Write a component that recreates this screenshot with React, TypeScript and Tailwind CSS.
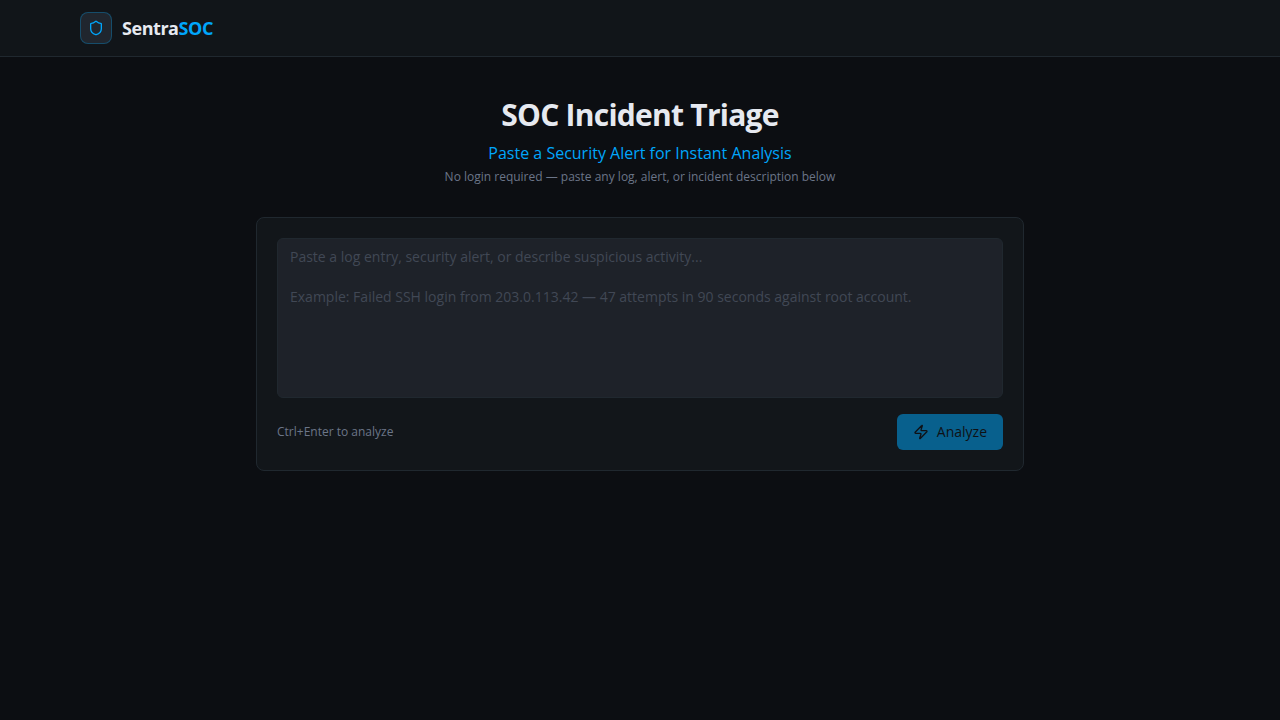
import { Shield, Zap } from "lucide-react";
import { useState } from "react";

function Header() {
  return (
    <header className="border-b border-[#20282f] bg-[#111519]">
      <div className="mx-auto flex h-14 max-w-6xl items-center gap-2.5 px-4">
        <div className="flex h-8 w-8 items-center justify-center rounded-lg border border-[#00a6fb]/30 bg-[#20262e]">
          <Shield className="h-4 w-4 text-[#00a6fb]" />
        </div>
        <span className="text-lg font-bold tracking-tight text-[#e6e9f0]">
          Sentra<span className="text-[#00a6fb]">SOC</span>
        </span>
      </div>
    </header>
  );
}

export default function App() {
  const [alertText, setAlertText] = useState("");

  return (
    <div className="min-h-screen bg-[#0c0e12] font-['Open_Sans',sans-serif] text-[#e6e9f0]">
      <Header />

      <main className="mx-auto max-w-3xl pt-10">
        <div className="mb-8 text-center">
          <h1 className="mb-2 text-3xl font-bold tracking-tight">SOC Incident Triage</h1>
          <p className="text-base text-[#00a6fb]">Paste a Security Alert for Instant Analysis</p>
          <p className="mt-1 text-xs text-[#6b7588]">
            No login required — paste any log, alert, or incident description below
          </p>
        </div>

        <section className="rounded-lg border border-[#20282f] bg-[#12161a] p-5">
          <textarea
            value={alertText}
            onChange={(e) => setAlertText(e.target.value)}
            placeholder={
              "Paste a log entry, security alert, or describe suspicious activity...\n\nExample: Failed SSH login from 203.0.113.42 — 47 attempts in 90 seconds against root account."
            }
            className="block h-40 w-full resize-none rounded-md border border-[#20282f] bg-[#1e2229] px-3 py-2 text-sm placeholder:text-[#414855] focus:outline-none"
          />
          <div className="mt-4 flex items-center justify-between">
            <span className="text-xs text-[#6b7588]">Ctrl+Enter to analyze</span>
            <button
              type="button"
              disabled={!alertText.trim()}
              className="flex h-9 items-center gap-2 rounded-md bg-[#00a9ff] px-4 text-sm font-medium text-[#0c0e12] disabled:opacity-50"
            >
              <Zap className="h-4 w-4" />
              Analyze
            </button>
          </div>
        </section>
      </main>
    </div>
  );
}
